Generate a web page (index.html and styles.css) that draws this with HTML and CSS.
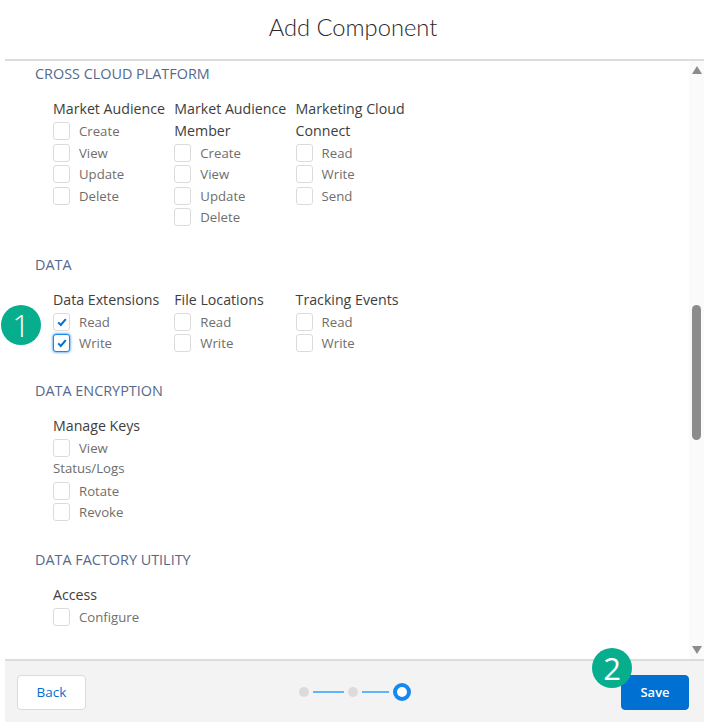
FILE: index.html
```html
<!DOCTYPE html>
<html lang="en">
	<head>
		<title>Add Component</title>
		<meta charset="utf-8">
		<link rel="stylesheet" href="styles.css">
	</head>
	<body>
		<div class="modal">
			<h1 class="modal-title">Add Component</h1>
			<div class="modal-body">
				<div class="scroll-content">
					<section class="scope">
						<h2>CROSS CLOUD PLATFORM</h2>
						<div class="columns">
							<div class="column">
								<h3>Market Audience</h3>
								<div class="option"><span class="box"></span>Create</div>
								<div class="option"><span class="box"></span>View</div>
								<div class="option"><span class="box"></span>Update</div>
								<div class="option"><span class="box"></span>Delete</div>
							</div>
							<div class="column">
								<h3>Market Audience Member</h3>
								<div class="option"><span class="box"></span>Create</div>
								<div class="option"><span class="box"></span>View</div>
								<div class="option"><span class="box"></span>Update</div>
								<div class="option"><span class="box"></span>Delete</div>
							</div>
							<div class="column">
								<h3>Marketing Cloud Connect</h3>
								<div class="option"><span class="box"></span>Read</div>
								<div class="option"><span class="box"></span>Write</div>
								<div class="option"><span class="box"></span>Send</div>
							</div>
						</div>
					</section>
					<section class="scope">
						<h2>DATA</h2>
						<div class="columns">
							<div class="column">
								<h3>Data Extensions</h3>
								<div class="option"><span class="box"><svg viewBox="0 0 10 10"><path d="M1.2 5.4 L3.8 8 L8.8 2.2" /></svg></span>Read</div>
								<div class="option"><span class="box focused"><svg viewBox="0 0 10 10"><path d="M1.2 5.4 L3.8 8 L8.8 2.2" /></svg></span>Write</div>
							</div>
							<div class="column">
								<h3>File Locations</h3>
								<div class="option"><span class="box"></span>Read</div>
								<div class="option"><span class="box"></span>Write</div>
							</div>
							<div class="column">
								<h3>Tracking Events</h3>
								<div class="option"><span class="box"></span>Read</div>
								<div class="option"><span class="box"></span>Write</div>
							</div>
						</div>
					</section>
					<section class="scope">
						<h2>DATA ENCRYPTION</h2>
						<div class="columns">
							<div class="column">
								<h3>Manage Keys</h3>
								<div class="option"><span class="box"></span>View</div>
								<h4>Status/Logs</h4>
								<div class="option"><span class="box"></span>Rotate</div>
								<div class="option"><span class="box"></span>Revoke</div>
							</div>
						</div>
					</section>
					<section class="scope">
						<h2>DATA FACTORY UTILITY</h2>
						<div class="columns">
							<div class="column">
								<h3>Access</h3>
								<div class="option"><span class="box"></span>Configure</div>
							</div>
						</div>
					</section>
				</div>
				<div class="scrollbar">
					<span class="arrow-up"></span>
					<span class="thumb"></span>
					<span class="arrow-down"></span>
				</div>
			</div>
			<div class="modal-footer">
				<button class="btn btn-back">Back</button>
				<div class="stepper">
					<span class="dot"></span>
					<span class="line line-long"></span>
					<span class="dot"></span>
					<span class="line"></span>
					<span class="ring"></span>
				</div>
				<button class="btn btn-save">Save</button>
			</div>
		</div>
		<span class="badge badge-one">1</span>
		<span class="badge badge-two">2</span>
	</body>
</html>
```

FILE: styles.css
```css
html, body {
	height: 100%;
}
body {
	font-family: "Open Sans", Lato, Arial, sans-serif;
	margin: 0;
	color: #3e3e3c;
	background-color: #fff;
	overflow: hidden;
	position: relative;
}
.modal {
	display: flex;
	flex-direction: column;
	height: 722px;
	margin-left: 5px;
}
.modal-title {
	margin: 0;
	height: 59px;
	line-height: 55px;
	padding-right: 3px;
	flex: none;
	text-align: center;
	font-family: Lato, "Open Sans", sans-serif;
	font-size: 23.7px;
	font-weight: 300;
	color: #2b2826;
	border-bottom: 2px solid #dcdcdc;
}
.modal-body {
	flex: 1;
	display: flex;
	min-height: 0;
}
.scroll-content {
	flex: 1;
	padding: 2.4px 0 0 30px;
	overflow: hidden;
}
.scope {
	margin-bottom: 26.5px;
}
.scope h2 {
	margin: 0 0 13.5px;
	font-size: 14.4px;
	line-height: 21.5px;
	font-weight: 400;
	color: #54698d;
}
.columns {
	display: flex;
	padding-left: 18px;
}
.column {
	width: 121.3px;
}
.column h3, .column h4 {
	margin: 0;
	font-size: 14.2px;
	line-height: 21.5px;
	font-weight: 400;
	color: #3e3e3c;
}
.column h4 {
	font-size: 13.2px;
	color: #6b6d70;
}
.option {
	display: flex;
	align-items: center;
	height: 21.5px;
	padding-top: 0.6px;
	margin-bottom: -0.6px;
	font-size: 13.2px;
	color: #706e6b;
}
.box {
	box-sizing: border-box;
	flex: none;
	width: 17px;
	height: 18px;
	margin-right: 9px;
	border: 1px solid #dddbda;
	border-radius: 3px;
	background-color: #fff;
	display: flex;
	align-items: center;
	justify-content: center;
}
.box svg {
	width: 10px;
	height: 10px;
	fill: none;
	stroke: #0070d2;
	stroke-width: 2;
}
.box.focused {
	border-color: #1589ee;
	box-shadow: 0 0 3px #0070d2;
}
.scrollbar {
	flex: none;
	width: 15px;
	background-color: #fafafa;
	display: flex;
	flex-direction: column;
	align-items: center;
}
.arrow-up, .arrow-down {
	width: 0;
	height: 0;
	border-left: 5.5px solid transparent;
	border-right: 5.5px solid transparent;
}
.arrow-up {
	margin-top: 5px;
	border-bottom: 8px solid #8c8c8c;
}
.arrow-down {
	margin-top: 206px;
	border-top: 8px solid #8c8c8c;
}
.thumb {
	width: 9px;
	height: 135px;
	margin-top: 231px;
	border-radius: 5px;
	background-color: #8c8c8c;
}
.modal-footer {
	flex: none;
	height: 63px;
	box-sizing: border-box;
	border-top: 2px solid #dcdcdc;
	background-color: #f3f3f3;
	display: flex;
	align-items: center;
	justify-content: space-between;
	padding: 2px 15px 0 12px;
}
.btn {
	width: 69px;
	height: 35px;
	box-sizing: border-box;
	border-radius: 4px;
	padding: 0 0 2px;
	font-family: inherit;
	font-size: 13.5px;
	font-weight: 600;
}
.btn-back {
	background-color: #fff;
	border: 1px solid #dddbda;
	color: #0070d2;
	font-weight: 400;
}
.btn-save {
	width: 68px;
	font-size: 13px;
	background-color: #0070d2;
	border: 1px solid #0070d2;
	color: #fff;
}
.stepper {
	display: flex;
	align-items: center;
	margin-left: 3px;
	margin-top: -1px;
}
.dot {
	width: 10px;
	height: 10px;
	border-radius: 50%;
	background-color: #dddbda;
}
.line {
	width: 27px;
	height: 2px;
	margin: 0 4px;
	background-color: #5eb4ff;
}
.line-long {
	width: 31px;
}
.ring {
	box-sizing: border-box;
	width: 18px;
	height: 18px;
	border: 4px solid #1589ee;
	border-radius: 50%;
	background-color: #fff;
}
.badge {
	position: absolute;
	width: 40px;
	height: 40px;
	border-radius: 50%;
	background-color: #07ae8e;
	color: #fff;
	font-size: 31px;
	line-height: 40px;
	text-align: center;
}
.badge-one {
	left: 1px;
	top: 305px;
	font-weight: 300;
}
.badge-two {
	left: 592px;
	top: 648px;
}
```
